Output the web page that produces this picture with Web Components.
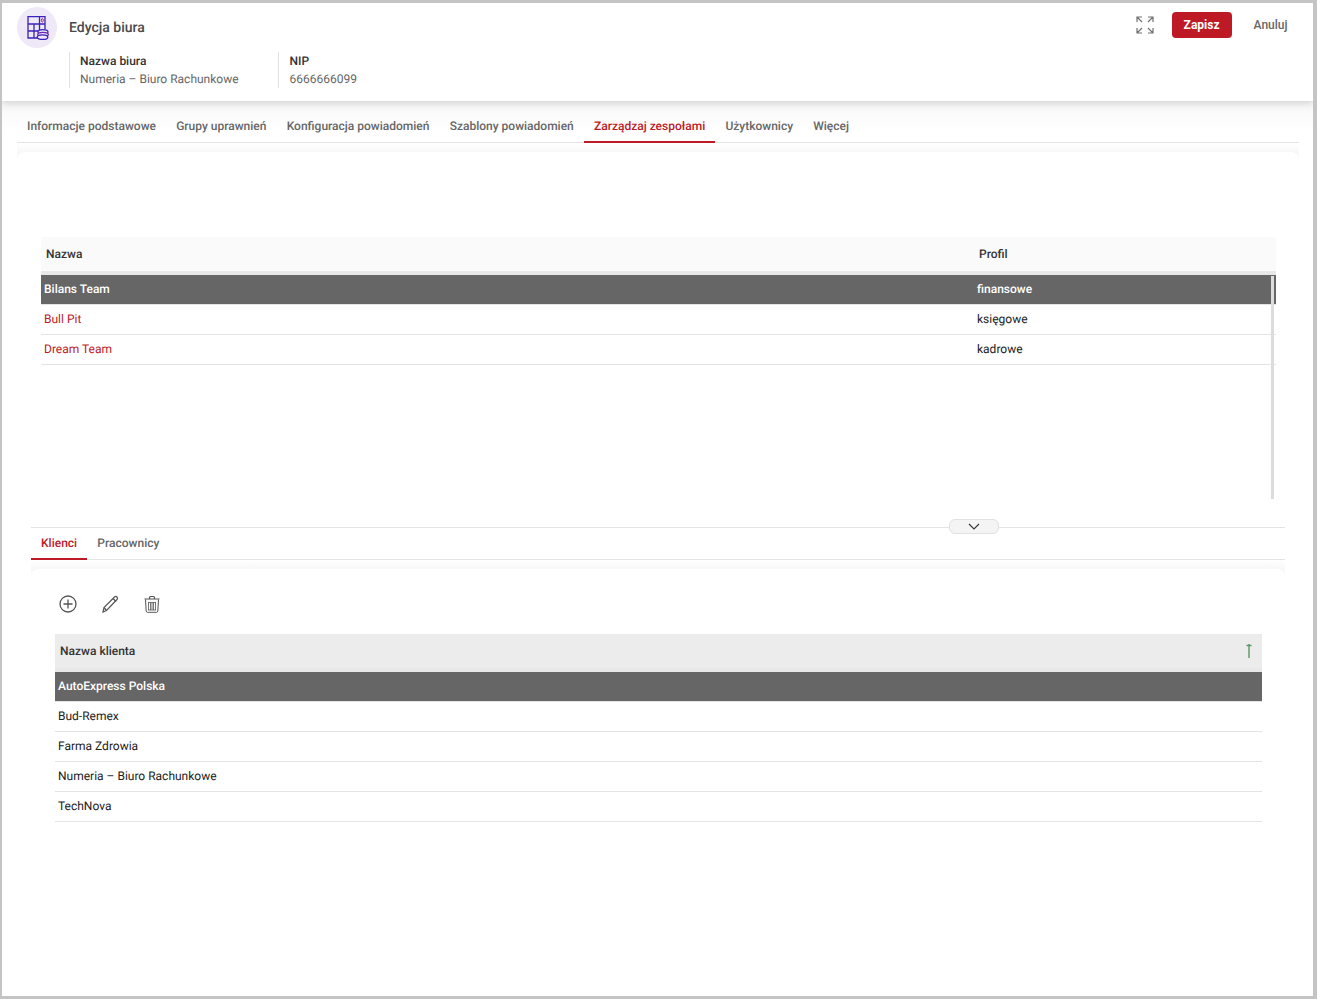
<!DOCTYPE html>
<html lang="pl">
<head>
<meta charset="utf-8">
<title>Edycja biura</title>
<style>
    html, body { margin: 0; height: 100%; }
    body { font-family: Roboto, "Liberation Sans", sans-serif; font-size: 12px; background: #fff; text-rendering: geometricPrecision; }
</style>
</head>
<body>

<template id="tmpl-window">
    <style>
        :host {
            display: block;
            box-sizing: border-box;
            width: 1317px;
            height: 999px;
            overflow: hidden;
            background: #fff;
            border-style: solid;
            border-color: #c4c4c4;
            border-width: 3px 4px 3px 2px;
            position: relative;
        }
        .edge { position: absolute; top: -3px; bottom: -3px; right: -4px; width: 1px; background: #4a7696; }
        .body { padding: 8px 14px 0 15px; background: linear-gradient(#f7f7f7, #fff 30px) no-repeat; }
    </style>
    <div class="edge"></div>
    <slot name="header"></slot>
    <div class="body"><slot></slot></div>
</template>

<template id="tmpl-header">
    <style>
        :host {
            display: block;
            box-sizing: border-box;
            height: 98px;
            padding: 4px 25.500px 0 15px;
            background: #fff;
            box-shadow: 0 2px 8px rgba(0, 0, 0, .16);
            position: relative;
        }
        .top { display: flex; align-items: flex-start; }
        .logo {
            width: 40px; height: 41px; border-radius: 50%;
            background: #efe8f7;
            display: flex; align-items: center; justify-content: center;
        }
        h1 { margin: 12px 0 0 12px; font-size: 14px; line-height: 18px; font-weight: 500; color: #4a4a4a; }
        .actions { margin-left: auto; display: flex; align-items: center; padding-top: 5px; }
        .fields { display: flex; margin: 4px 0 0 52px; }
        button { font: inherit; border: 0; cursor: pointer; }
        .save {
            width: 60px; height: 26px; margin-left: 17.500px;
            background: #bd1a26; color: #fff; border-radius: 4px; font-weight: 700;
        }
        .cancel { margin-left: 22px; padding: 0; height: 26px; background: none; color: #666; font-weight: 500; }
        svg { display: block; }
    </style>
    <div class="top">
        <div class="logo">
            <svg width="24" height="24" viewBox="0 0 24 24" fill="none" stroke="#3b22b8" stroke-width="1.300">
                <path d="M13 22H3V.7h17V13"/>
                <path d="M3 8h17M3 15h10M9 8v14M14.500 8v6M14.500 .7V8"/>
                <ellipse cx="17.300" cy="4.300" rx="1" ry="1.700" stroke="#a8287c" stroke-width="1"/>
                <ellipse cx="18" cy="16" rx="5" ry="2.300" fill="#efe8f7"/>
                <ellipse cx="18" cy="18.600" rx="5.300" ry="2.300" fill="#efe8f7" stroke="#6a26b4"/>
                <ellipse cx="17.500" cy="21.200" rx="5.300" ry="2.300" fill="#efe8f7"/>
            </svg>
        </div>
        <h1><slot name="title"></slot></h1>
        <div class="actions">
            <svg width="18" height="18" viewBox="0 0 18 18" fill="none" stroke="#707070" stroke-width="1.200" style="margin-right:.500px">
                <path d="M1 6V1h5M1 1l5 5M12 1h5v5M17 1l-5 5M1 12v5h5M1 17l5-5M12 17h5v-5M17 17l-5-5"/>
            </svg>
            <button class="save">Zapisz</button>
            <button class="cancel">Anuluj</button>
        </div>
    </div>
    <div class="fields"><slot name="field"></slot></div>
</template>

<template id="tmpl-field">
    <style>
        :host {
            display: block;
            box-sizing: border-box;
            height: 36px;
            border-left: 1px solid #e2e2e2;
            padding-left: var(--pad, 10px);
            line-height: 18px;
            width: 209px;
        }
        .label { font-weight: 500; color: #333; }
        .value { color: #666; }
    </style>
    <div class="label"><slot name="label"></slot></div>
    <div class="value"><slot></slot></div>
</template>

<template id="tmpl-tabs">
    <style>
        :host {
            display: flex;
            gap: .2px;
            box-sizing: border-box;
            height: var(--tabs-h, 34px);
            border-bottom: 1px solid #e4e4e4;
        }
    </style>
    <slot></slot>
</template>

<template id="tmpl-tab">
    <style>
        :host {
            display: block;
            box-sizing: border-box;
            height: calc(100% + 1px);
            padding: 0 10px;
            line-height: var(--tab-lh, 34px);
            color: #666;
            font-weight: 500;
            white-space: nowrap;
            cursor: pointer;
        }
        :host([active]) { color: #bd1a26; border-bottom: 2px solid #bd1a26; }
    </style>
    <slot></slot>
</template>

<template id="tmpl-panel">
    <style>
        :host {
            display: block;
            padding-top: 9px;
            background: linear-gradient(#fff, #f8f8f8 9px, #f8f8f8 18px, #fff 18px) no-repeat;
        }
        .inner { background: #fff; border-radius: 8px 8px 0 0; }
    </style>
    <div class="inner"><slot></slot></div>
</template>

<template id="tmpl-grid">
    <style>
        :host { display: block; position: relative; }
        .head {
            display: grid;
            grid-template-columns: var(--cols, 1fr);
            height: 34px;
            align-items: center;
            background: var(--head-bg, #fafafa);
            border-bottom: 4px solid #e8e8e8;
            color: #333;
            font-weight: 500;
        }
        .head ::slotted(*) { padding-left: 5px; }
    </style>
    <div class="head"><slot name="head"></slot></div>
    <slot></slot>
</template>

<template id="tmpl-row">
    <style>
        :host {
            display: grid;
            grid-template-columns: var(--cols, 1fr);
            box-sizing: border-box;
            height: 30px;
            padding-bottom: 2px;
            align-items: center;
            border-bottom: 1px solid #e4e4e4;
            color: #222;
        }
        :host([selected]) { background: #666; color: #fff; font-weight: 500; }
        :host([link]) { color: #bd1a26; }
        ::slotted(*) { padding-left: 3px; }
    </style>
    <slot></slot>
</template>

<template id="tmpl-splitter">
    <style>
        :host { display: block; position: relative; height: 1px; background: #e4e4e4; }
        .handle {
            position: absolute; left: 918px; top: -8px;
            box-sizing: border-box; width: 50px; height: 15px;
            background: #f4f4f4; border: 1px solid #e2e2e2; border-radius: 6px;
            display: flex; align-items: center; justify-content: center;
        }
    </style>
    <div class="handle">
        <svg width="12" height="7" viewBox="0 0 12 7" fill="none" stroke="#333" stroke-width="1.100"><path d="M1 1l5 5 5-5"/></svg>
    </div>
</template>

<template id="tmpl-toolbar">
    <style>
        :host { display: flex; gap: 20px; align-items: center; height: 22px; padding-left: 2px; }
        svg { display: block; }
    </style>
    <svg width="22" height="22" viewBox="0 0 22 22" fill="none" stroke="#555" stroke-width="1.300">
        <circle cx="11" cy="11" r="8"/><path d="M11 6.500v9M6.500 11h9"/>
    </svg>
    <svg width="22" height="22" viewBox="0 0 22 22" fill="none" stroke="#555" stroke-width="1.200">
        <path d="M4 19l1-4.500L15.500 4c.8-.8 1.800-.8 2.500 0s.7 1.700 0 2.500L7.500 17.500z"/>
        <path d="M14 5.500l3 3M5 14.500l2.500 3"/>
    </svg>
    <svg width="22" height="22" viewBox="0 0 22 22" fill="none" stroke="#555" stroke-width="1">
        <path d="M3.500 6h15M8.500 6V4.500c0-.6.300-1 .8-1h3.400c.5 0 .8.400.8 1V6" stroke-width="1.200"/>
        <path d="M4.500 6.500l.7 11.500c0 .8.500 1.300 1.200 1.300h9.200c.7 0 1.200-.5 1.200-1.300l.7-11.500"/>
        <path d="M7 9.500h8M7 17h8M7.500 9.500V17M9.500 9.500V17M11 9.500V17M12.500 9.500V17M14.500 9.500V17" stroke-width=".8"/>
    </svg>
</template>

<script>
    // every component just clones its template into an open shadow root
    const plain = { 'edit-window': 'tmpl-window', 'edit-header': 'tmpl-header', 'info-field': 'tmpl-field',
        'tab-bar': 'tmpl-tabs', 'tab-item': 'tmpl-tab', 'soft-panel': 'tmpl-panel', 'data-grid': 'tmpl-grid',
        'grid-row': 'tmpl-row', 'pane-splitter': 'tmpl-splitter', 'icon-toolbar': 'tmpl-toolbar' };

    for (const [name, id] of Object.entries(plain)) {
        customElements.define(name, class extends HTMLElement {
            constructor() {
                super();
                this.attachShadow({ mode: 'open' });
                this.shadowRoot.append(document.getElementById(id).content.cloneNode(true));
            }
        });
    }
</script>

<style>
    .team-pane { display: block; padding: 85px 23px 0 24px; height: 290px; box-sizing: border-box; position: relative; --cols: 933px 1fr; }
    .scroll { position: absolute; right: 25px; top: 124px; width: 3px; height: 223px; background: #dcdcdc; }
    .lower { display: block; margin: 85px 14px 0 14px; }
    .lower-tabs { --tabs-h: 32px; --tab-lh: 30px; }
    .client-pane { display: block; padding: 24px 23.500px 0 24px; --head-bg: #ececec; }
    .clients { margin-top: 19px; }
    .arrow { position: absolute; right: 9px; top: 9px; padding: 0; }
</style>

<edit-window>
    <edit-header slot="header">
        <span slot="title">Edycja biura</span>
        <info-field slot="field"><span slot="label">Nazwa biura</span>Numeria – Biuro Rachunkowe</info-field>
        <info-field slot="field" style="--pad:10.500px"><span slot="label">NIP</span>6666666099</info-field>
    </edit-header>

    <tab-bar>
        <tab-item>Informacje podstawowe</tab-item>
        <tab-item>Grupy uprawnień</tab-item>
        <tab-item>Konfiguracja powiadomień</tab-item>
        <tab-item>Szablony powiadomień</tab-item>
        <tab-item active>Zarządzaj zespołami</tab-item>
        <tab-item>Użytkownicy</tab-item>
        <tab-item>Więcej</tab-item>
    </tab-bar>

    <soft-panel>
        <div class="team-pane">
            <data-grid>
                <span slot="head">Nazwa</span>
                <span slot="head">Profil</span>
                <grid-row selected><span>Bilans Team</span><span>finansowe</span></grid-row>
                <grid-row link><span>Bull Pit</span><span style="color:#222">księgowe</span></grid-row>
                <grid-row link><span>Dream Team</span><span style="color:#222">kadrowe</span></grid-row>
            </data-grid>
            <div class="scroll"></div>
        </div>
    </soft-panel>

    <div class="lower">
        <pane-splitter></pane-splitter>
        <tab-bar class="lower-tabs">
            <tab-item active>Klienci</tab-item>
            <tab-item>Pracownicy</tab-item>
        </tab-bar>
        <soft-panel>
            <div class="client-pane">
                <icon-toolbar></icon-toolbar>
                <data-grid class="clients">
                    <span slot="head">Nazwa klienta</span>
                    <svg class="arrow" slot="head" width="8" height="15" viewBox="0 0 8 15" fill="none" stroke="#5a9a64" stroke-width="1.400"><path d="M4 15V1M1.500 2.500h5"/></svg>
                    <grid-row selected><span>AutoExpress Polska</span></grid-row>
                    <grid-row><span>Bud-Remex</span></grid-row>
                    <grid-row><span>Farma Zdrowia</span></grid-row>
                    <grid-row><span>Numeria – Biuro Rachunkowe</span></grid-row>
                    <grid-row><span>TechNova</span></grid-row>
                </data-grid>
            </div>
        </soft-panel>
    </div>
</edit-window>
</body>
</html>
